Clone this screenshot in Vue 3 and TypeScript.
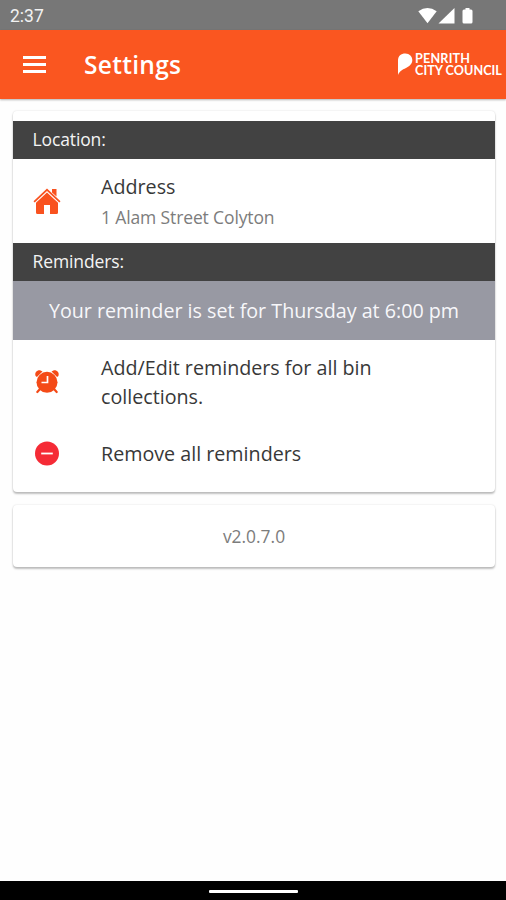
<script setup lang="ts">
interface ActionItem {
  icon: 'alarm' | 'remove'
  label: string
}

const actions: ActionItem[] = [
  { icon: 'alarm', label: 'Add/Edit reminders for all bin collections.' },
  { icon: 'remove', label: 'Remove all reminders' },
]
</script>

<template>
  <div class="screen">
    <div class="status">
      <span class="time">2:37</span>
      <svg class="status-icons" width="58" height="18" viewBox="0 0 58 18" fill="#fff">
        <path d="M0.3 4.200Q9.500-2.200 18.700 4.200L9.500 16.200Z" />
        <path d="M36.500 1V16.500H20.500Z" />
        <path d="M47.500 1h4v1.500h1.500q1.500 0 1.500 1.500v11q0 1.500-1.500 1.500h-7q-1.500 0-1.500-1.500v-11q0-1.500 1.500-1.500h1.500z" />
      </svg>
    </div>
    <header class="bar">
      <button class="menu" aria-label="Menu"><i></i><i></i><i></i></button>
      <h1>Settings</h1>
      <div class="logo">
        <svg width="15" height="23" viewBox="0 0 15 23" fill="#fff">
          <path d="M0 22V7.500C0 3 3 0.500 7.300 0.500s7 3 7 6.600c0 4-2.800 6.300-6.300 7.900C4 16.800 1.800 18 0 22Z" />
        </svg>
        <div class="brand"><span class="b1">PENRITH</span><span class="b2">CITY COUNCIL</span></div>
      </div>
    </header>
    <main class="content">
      <section class="card main-card">
        <h2 class="divider first">Location:</h2>
        <div class="row address">
          <svg class="icon home" width="28" height="28" viewBox="0 0 28 28" fill="#f9521f">
            <path d="M19 2h4.500v7.500L19 5.500Z" />
            <path d="M0.500 14.300 14 1.500l13.500 12.800-1.200 1.200L14 4 1.700 15.500Z" />
            <path d="M3 15.800 14 5.500l11 10.300V25.500q0 1.500-1.500 1.500H17v-9h-6v9H4.500Q3 27 3 25.500Z" />
          </svg>
          <div class="address-text">
            <h3>Address</h3>
            <p>1 Alam Street Colyton</p>
          </div>
        </div>
        <h2 class="divider second">Reminders:</h2>
        <p class="notice"><span>Your reminder is set for Thursday at 6:00 pm</span></p>
        <div v-for="a in actions" :key="a.icon" class="row" :class="a.icon">
          <svg v-if="a.icon === 'alarm'" class="icon" width="26" height="26" viewBox="0 0 26 26" fill="#f44a17">
            <circle cx="13" cy="13.300" r="10.500" />
            <path d="M1.600 7C0.300 3.500 3 0.900 6.500 1.400L8.500 2.500 2.900 8ZM24.400 7C25.700 3.500 23 0.900 19.500 1.400L17.500 2.500 23.100 8Z" />
            <path d="M6 20 3.300 23M20 20l2.700 3" stroke="#f44a17" stroke-width="2.200" stroke-linecap="round" />
            <path d="M13.500 7v6.500H7.500" fill="none" stroke="#fff" stroke-width="1.700" />
          </svg>
          <svg v-else class="icon" width="26" height="26" viewBox="0 0 26 26">
            <circle cx="13" cy="12.500" r="12" fill="#f52b36" />
            <path d="M7.200 12.500h11.600" stroke="#fff" stroke-width="1.800" />
          </svg>
          <span class="label">{{ a.label }}</span>
        </div>
      </section>
      <section class="card version"><span>v2.0.7.0</span></section>
    </main>
    <footer class="nav"><i></i></footer>
  </div>
</template>

<style>
body { background: #fff; }
</style>

<style scoped>
.screen {
  display: flex;
  flex-direction: column;
  height: 900px;
  overflow: hidden;
  background: #fefefe;
  font-family: "Open Sans", "Noto Sans", sans-serif;
}
h1, h2, h3, p { margin: 0; font-weight: 400; }
.status {
  display: flex;
  flex: none;
  align-items: center;
  justify-content: space-between;
  height: 30px;
  padding: 0 30px 0 10px;
  background: #777;
  color: #f2f2f2;
}
.time { font: 17.500px/30px Roboto, sans-serif; padding-top: 2px; }
.status-icons { margin-top: 1px; }
.bar {
  display: flex;
  flex: none;
  align-items: center;
  height: 69px;
  background: #fa5620;
  color: #fff;
  box-shadow: 0 1px 2px rgba(0, 0, 0, 0.3);
}
.menu {
  display: flex;
  flex-direction: column;
  gap: 4px;
  width: 23px;
  margin: 0 0 0 23px;
  padding: 0;
  border: 0;
  background: none;
}
.menu i { height: 3px; background: #fff; }
h1 {
  margin-left: 38px;
  font-size: 24.500px;
  letter-spacing: 0.3px;
  font-weight: 600;
  line-height: 34px;
}
.logo {
  display: flex;
  gap: 2px;
  align-items: flex-start;
  width: 108px;
  margin-left: auto;
}
.brand {
  display: flex;
  flex-direction: column;
  font-family: Lato, sans-serif;
  font-size: 12.600px;
  font-weight: 700;
  line-height: 12px;
  white-space: nowrap;
}
.b1 { letter-spacing: 0.2px; }
.b2 { letter-spacing: 0.05px; }
.content { flex: 1; padding: 12px 11px 0 13px; }
.card {
  background: #fff;
  border-radius: 4px;
  box-shadow: 0 2px 2px rgba(0, 0, 0, 0.24), 0 0 2px rgba(0, 0, 0, 0.14);
}
.main-card { box-sizing: border-box; height: 381px; padding-top: 10px; }
.divider {
  height: 38px;
  padding-left: 19.500px;
  background: #424242;
  color: #f4f4f4;
  font-size: 17.500px;
  letter-spacing: -0.12px;
  line-height: 37px;
}
.row { display: flex; align-items: center; color: #383838; }
.icon { flex: none; width: 26px; margin: 0 41px 0 21px; }
.home { width: 28px; margin: 0 40px 0 20px; }
.address { height: 84px; }
.address-text { padding-top: 1px; }
h3 { font-size: 19.700px; line-height: 30px; }
.address-text p {
  color: #7c7c7c;
  font-size: 17.500px;
  letter-spacing: -0.13px;
  line-height: 30px;
}
.notice {
  height: 59px;
  background: #9899a3;
  color: #f7f7fa;
  font-size: 19.720px;
  line-height: 60px;
  text-align: center;
  white-space: nowrap;
}
.alarm { height: 84px; }
.remove { height: 60px; }
.label { width: 300px; font-size: 19.720px; line-height: 29.500px; }
.version {
  height: 62px;
  margin-top: 13px;
  color: #7c7c7c;
  font-size: 17.400px;
  line-height: 62px;
  text-align: center;
}
.nav {
  display: flex;
  flex: none;
  align-items: center;
  justify-content: center;
  height: 19px;
  background: #000;
}
.nav i { width: 89px; height: 3px; margin-top: 2px; background: #fff; border-radius: 1px; }
</style>
